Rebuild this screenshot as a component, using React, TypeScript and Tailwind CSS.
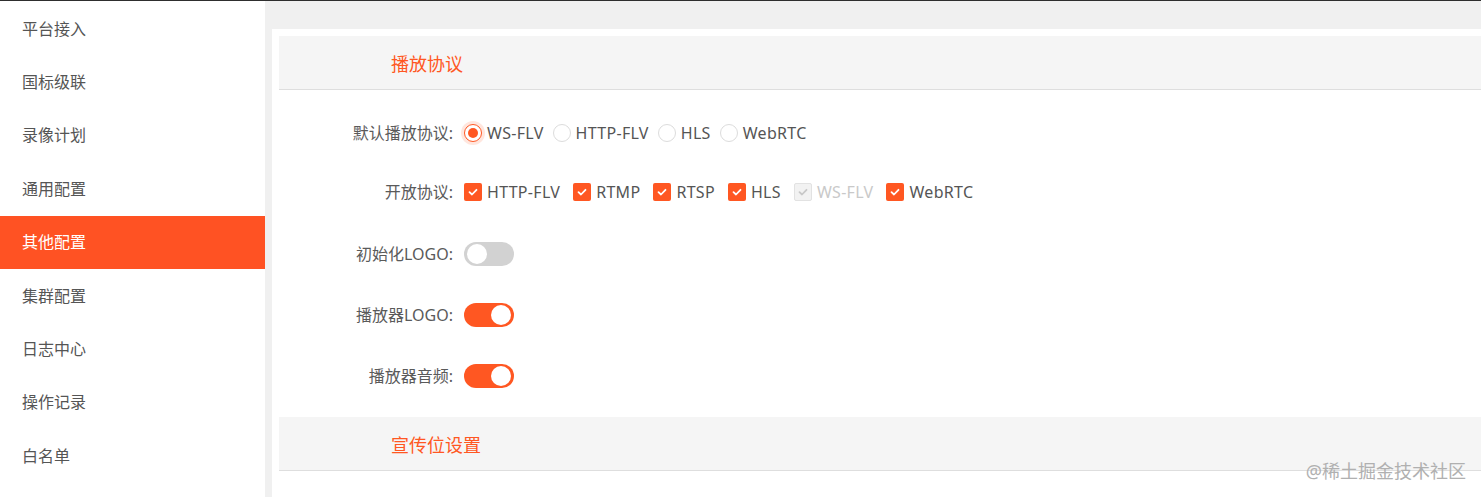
import React from "react";

const menu = ["平台接入", "国标级联", "录像计划", "通用配置", "其他配置", "集群配置", "日志中心", "操作记录", "白名单"];

const Check = ({ color = "#fff" }: { color?: string }) => (
  <svg width="12" height="12" viewBox="0 0 12 12" fill="none">
    <polyline points="2.5,6.2 5,8.5 9.5,3.8" stroke={color} strokeWidth="1.8" strokeLinecap="round" strokeLinejoin="round" />
  </svg>
);

const Radio = ({ label, on }: { label: string; on?: boolean }) => (
  <div className="flex items-center mr-[9px]">
    {on ? (
      <span className="w-[18px] h-[18px] rounded-full border border-[#ff5722] bg-white flex items-center justify-center shadow-[0_0_0_3px_rgba(255,87,34,0.15)]">
        <span className="w-[10px] h-[10px] rounded-full bg-[#ff5722]" />
      </span>
    ) : (
      <span className="w-[18px] h-[18px] rounded-full border border-[#dcdcdc] bg-white" />
    )}
    <span className="ml-[5px] text-[#555] tracking-[0.3px]">{label}</span>
  </div>
);

const Box = ({ label, disabled }: { label: string; disabled?: boolean }) => (
  <div className="flex items-center mr-[13px]">
    {disabled ? (
      <span className="w-[18px] h-[18px] rounded-[2px] border border-[#e2e2e2] bg-[#f2f2f2] flex items-center justify-center">
        <Check color="#c8c8c8" />
      </span>
    ) : (
      <span className="w-[18px] h-[18px] rounded-[2px] bg-[#ff5722] flex items-center justify-center">
        <Check />
      </span>
    )}
    <span className={"ml-[5px] tracking-[0.3px] " + (disabled ? "text-[#c9c9c9]" : "text-[#555]")}>{label}</span>
  </div>
);

const Toggle = ({ on }: { on?: boolean }) =>
  on ? (
    <span className="w-[50px] h-[24px] rounded-full bg-[#ff5722] flex items-center justify-end pr-[3px]">
      <span className="w-[20px] h-[20px] rounded-full bg-white" />
    </span>
  ) : (
    <span className="w-[50px] h-[24px] rounded-full bg-[#d2d2d2] flex items-center pl-[3px]">
      <span className="w-[20px] h-[20px] rounded-full bg-white" />
    </span>
  );

const Row = ({ label, children, cls }: { label: string; children: React.ReactNode; cls: string }) => (
  <div className={"flex items-center h-[30px] " + cls}>
    <div className="w-[174px] text-right text-[#5a5a5a]">{label}</div>
    <div className="ml-[11px] flex items-center">{children}</div>
  </div>
);

const SectionHead = ({ title }: { title: string }) => (
  <div className="h-[54px] bg-[#f5f5f5] border-b border-[#dedede] flex items-center pl-[112px] pt-[3px] text-[18px] text-[#ff5722]">
    {title}
  </div>
);

export default function App() {
  return (
    <div
      className="relative w-[1481px] h-[497px] overflow-hidden bg-[#f0f0f0] border-t border-[#2e2e2e] flex text-[16px]"
      style={{ fontFamily: '"Noto Sans", "Noto Sans CJK SC", sans-serif' }}
    >
      <aside className="w-[265px] shrink-0 bg-white pt-px">
        {menu.map((m) => (
          <div
            key={m}
            className={
              "h-[53.4px] flex items-center pl-[22px] " +
              (m === "其他配置" ? "bg-[#ff5223] text-white" : "text-[#555]")
            }
          >
            {m}
          </div>
        ))}
      </aside>
      <main className="flex-1 pl-[7px] pt-[28px]">
        <div className="bg-white h-full pl-[7px] pt-[7px]">
          <SectionHead title="播放协议" />
          <div className="pt-[28px] pb-[26px]">
            <Row label="默认播放协议:" cls="mb-[29px]">
              <Radio label="WS-FLV" on />
              <Radio label="HTTP-FLV" />
              <Radio label="HLS" />
              <Radio label="WebRTC" />
            </Row>
            <Row label="开放协议:" cls="mb-[32px]">
              <Box label="HTTP-FLV" />
              <Box label="RTMP" />
              <Box label="RTSP" />
              <Box label="HLS" />
              <Box label="WS-FLV" disabled />
              <Box label="WebRTC" />
            </Row>
            <Row label="初始化LOGO:" cls="mb-[31px]">
              <Toggle />
            </Row>
            <Row label="播放器LOGO:" cls="mb-[31px]">
              <Toggle on />
            </Row>
            <Row label="播放器音频:" cls="">
              <Toggle on />
            </Row>
          </div>
          <SectionHead title="宣传位设置" />
        </div>
      </main>
      <div className="absolute right-[15px] bottom-[12px] text-[18px] text-[#b0b0b0]">@稀土掘金技术社区</div>
    </div>
  );
}
